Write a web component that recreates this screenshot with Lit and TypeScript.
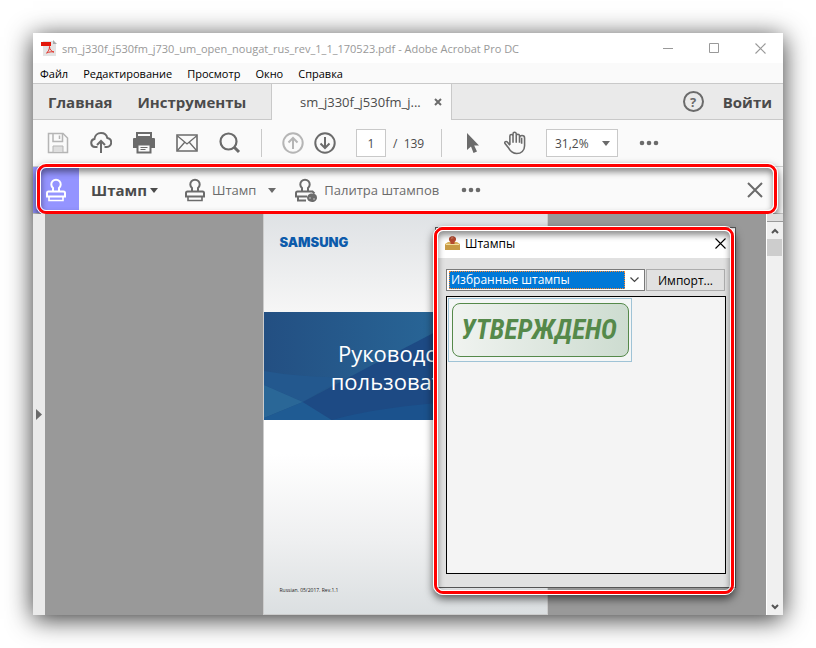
import { LitElement, html, css, svg } from "lit";
import { customElement } from "lit/decorators.js";

const icon = (w: number, h: number, cls: string, body: unknown) => html`
  <svg class=${cls} width=${w} height=${h} viewBox="0 0 ${w} ${h}" aria-hidden="true">${body}</svg>`;

const stampShape = svg`
  <path d="M8 14.500V11a4.700 4.700 0 1 1 6 0v3.500" fill="none" stroke="currentColor" stroke-width="2"/>
  <path d="M2 19.500v-3.500a1.500 1.500 0 0 1 1.500-1.500h15a1.500 1.500 0 0 1 1.500 1.500v3.500z" fill="none" stroke="currentColor" stroke-width="2"/>
  <path d="M4 20v3.500h14V20" fill="none" stroke="currentColor" stroke-width="1.600"/>`;

const icons = {
  pdf: icon(16, 16, "ic", svg`
    <path d="M2 1h10l3 3v12H2z" fill="#e4e4e4"/><path d="M12 0v4h4z" fill="#a9a9a9"/>
    <path d="M0 2h10v4H0z" fill="#e3170a"/>
    <path d="M5.500 13c2-1.500 3-4 3-6.500 0 3 2 5 4.500 5.500-3-.5-5 0-7.500 1z" fill="none" stroke="#e3352c"/>`),
  save: icon(22, 22, "ic", svg`
    <path d="M1.500 1.500h14.500l4.500 4.500v14.500h-19z" fill="none" stroke="currentColor" stroke-width="1.500"/>
    <path d="M6 1.500v8h9.500v-8M12.500 3.500v3.500" fill="none" stroke="currentColor" stroke-width="1.500"/>
    <path d="M6 20.500v-6.500h10v6.500z" fill="#dedede" stroke="currentColor"/>`),
  cloud: icon(22, 22, "ic", svg`
    <path d="M7.500 15H5a4 4 0 0 1-.6-7.900C4.800 3.500 7.500 1 11 1c3.200 0 5.700 2 6.300 5 2.300.4 3.900 2.200 3.900 4.400C21.200 13 19.300 15 17 15h-2.500" fill="none" stroke="currentColor" stroke-width="2"/>
    <path d="M11 21V9.500M7 13l4-4 4 4" fill="none" stroke="currentColor" stroke-width="2"/>`),
  print: icon(22, 22, "ic", svg`
    <path d="M4 1h14v4H4z" fill="#fafafa" stroke="currentColor" stroke-width="2"/>
    <path d="M1 6h20a1 1 0 0 1 1 1v9H0V7a1 1 0 0 1 1-1z" fill="currentColor"/>
    <path d="M4.500 12.500h13v8h-13z" fill="#fafafa" stroke="currentColor" stroke-width="2"/>
    <path d="M7.500 15.500h7M7.500 17.500h5" stroke="currentColor"/>`),
  mail: icon(22, 18, "ic", svg`
    <path d="M1 1h20v16H1z" fill="none" stroke="currentColor" stroke-width="1.600"/>
    <path d="M1.500 2l9.500 8 9.500-8M1.500 16.500l7-8M20.500 16.500l-7-8" fill="none" stroke="currentColor" stroke-width="1.300"/>`),
  search: icon(22, 22, "ic", svg`
    <circle cx="9.500" cy="9.500" r="8" fill="none" stroke="currentColor" stroke-width="2.200"/>
    <path d="M15 15l5 5" stroke="currentColor" stroke-width="3"/>`),
  up: icon(22, 22, "ic", svg`
    <circle cx="11" cy="11" r="9.700" fill="none" stroke="currentColor" stroke-width="2"/>
    <path d="M11 17V6M6.500 10.500L11 6l4.500 4.500" fill="none" stroke="currentColor" stroke-width="2"/>`),
  down: icon(22, 22, "ic", svg`
    <circle cx="11" cy="11" r="9.700" fill="none" stroke="currentColor" stroke-width="2"/>
    <path d="M11 5v11M6.500 11.500L11 16l4.500-4.500" fill="none" stroke="currentColor" stroke-width="2"/>`),
  pointer: icon(22, 22, "ic", svg`<path d="M5 1v17l4-3.500 2.500 6.500 3.500-1.500-2.800-6H17z" fill="currentColor"/>`),
  hand: icon(22, 24, "ic", svg`
    <path d="M6 14V5.200a1.600 1.600 0 0 1 3.200 0V3a1.600 1.600 0 0 1 3.300 0v2a1.600 1.600 0 0 1 3.300 0v2.200a1.600 1.600 0 0 1 5.200 0V15c0 5-3.500 8-8 8-5 0-7-3-8.500-6L.9 12.600c-.6-1.600 1.300-2.600 2.500-1.300L6 14.500M9.200 4.500V12M12.500 4v8M15.800 5.500V12M18 7v6" transform="scale(.98)" fill="none" stroke="currentColor" stroke-width="1.600"/>`),
  dots: icon(22, 6, "ic", svg`<circle cx="4" cy="3" r="2.300" fill="currentColor"/><circle cx="11" cy="3" r="2.300" fill="currentColor"/><circle cx="18" cy="3" r="2.300" fill="currentColor"/>`),
  caret: icon(8, 5, "ic", svg`<path d="M0 0h8L4 5z" fill="currentColor"/>`),
  stamp: icon(22, 26, "ic", stampShape),
  palette: icon(24, 26, "ic", svg`
    <path d="M8 14.500V11a4.700 4.700 0 1 1 6 0v3.500" fill="none" stroke="currentColor" stroke-width="2"/>
    <path d="M13 19.500H2v-3.500a1.500 1.500 0 0 1 1.500-1.500h15l2 2M4 20v3.500h8" fill="none" stroke="currentColor" stroke-width="2"/>
    <path d="M18 16.500c3 0 5 1.600 5 4s-2 4.500-5 4.500-5-2-5-4.200 2-4.300 5-4.300z" fill="currentColor"/>
    <circle cx="16" cy="21" r="1" fill="#a5a5a5"/><circle cx="20" cy="22" r="1" fill="#a5a5a5"/>`),
  close: icon(16, 16, "ic", svg`<path d="M1 1l14 14M15 1L1 15" stroke="currentColor" stroke-width="2"/>`),
  thinClose: icon(11, 11, "ic", svg`<path d="M.5.5l10 10M10.500.5l-10 10" stroke="currentColor" stroke-width="1.100"/>`),
  minimise: icon(11, 11, "ic", svg`<path d="M0 5.500h10" stroke="currentColor"/>`),
  maximise: icon(11, 11, "ic", svg`<path d="M.5.500h9v9h-9z" fill="none" stroke="currentColor"/>`),
  tabClose: icon(8, 8, "ic", svg`<path d="M1 1l6 6M7 1L1 7" stroke="#6b6b6b" stroke-width="2"/>`),
  chevUp: icon(8, 6, "ic", svg`<path d="M1 5l3-3 3 3" fill="none" stroke="currentColor" stroke-width="2"/>`),
  chevDown: icon(8, 6, "ic", svg`<path d="M1 1l3 3 3-3" fill="none" stroke="currentColor" stroke-width="2"/>`),
  comboArrow: icon(9, 6, "ic", svg`<path d="M.5.500l4 4 4-4" fill="none" stroke="currentColor" stroke-width="1.200"/>`),
  expand: icon(6, 11, "ic", svg`<path d="M0 0l6 5.500L0 11z" fill="currentColor"/>`),
  stamper: icon(15, 15, "ic", svg`
    <path d="M0 8l3-2h9l3 2v5.500H0z" fill="#d9b05a"/><path d="M0 9h15v5H0z" fill="#c79a45"/><path d="M1 8.500h13" stroke="#f1dc9b"/>
    <path d="M5.500 8V6C4 5 3.600 3.400 4.200 2 5-.2 10-.2 10.800 2c.6 1.400 0 3-1.300 4v2z" fill="#b4492f"/>
    <path d="M6 2.500c.6-.8 1.700-.8 2.300-.5" stroke="#e59a83" fill="none"/>`),
};

const menu = ["Файл", "Редактирование", "Просмотр", "Окно", "Справка"];
const fileTools = [
  ["Сохранить", "save"], ["В облако", "cloud"], ["Печать", "print"], ["Почта", "mail"], ["Поиск", "search"],
] as const;

const shared = css`
  * { box-sizing: border-box; }
  button, input, select { margin: 0; padding: 0; border: 0; border-radius: 0; background: none; color: inherit; font: inherit; }
  button { display: inline-flex; align-items: center; justify-content: center; cursor: default; white-space: nowrap; }
  select { appearance: none; }
  .ic { display: block; flex: none; }
`;

@customElement("stamp-dialog")
export class StampDialog extends LitElement {
  static styles = [shared, css`
    :host { display: flex; flex-direction: column; box-sizing: border-box; background: #e1e1e1; font-size: 12px; color: #000; border: 1px solid #555; padding: 1px 9px 13px 10px; }
    .title { display: flex; align-items: center; gap: 5px; height: 29px; margin: 0 -9px 0 -10px; padding: 0 9px 0 9px; background: #fff; }
    .name { flex: 1; margin: 0; font-size: 12px; font-weight: 400; }
    .pick { display: flex; gap: 1px; margin-top: 11px; padding-right: 1px; height: 22px; }
    .combo { display: flex; align-items: center; flex: 1; padding: 2px 0 2px 2px; background: #fff; border: 1px solid #7a7a7a; }
    .combo select { flex: 1; min-width: 0; height: 18px; padding-left: 1px; line-height: 16px; background: #0078d7; color: #fff; border: 1px dotted #ff8728; }
    .arrow { display: flex; justify-content: center; width: 19px; color: #444; }
    .import { width: 79px; background: #e1e1e1; border: 1px solid #adadad; }
    .list { flex: 1; margin-top: 5px; border: 1px solid #000; background: #f4f4f4; padding: 1px; }
    .thumb { display: flex; width: 184px; height: 64px; padding: 4px 2px 4px 3px; border: 1px solid #9fc3d6; background: #f4f6f6; }
    .stamp { flex: 1; display: flex; align-items: center; padding-left: 8px; border: 1px solid #55894a; border-radius: 8px;
      background: linear-gradient(90deg, #f0f3f0, #cddcd0); color: #55894a;
      font: italic 700 27px "Roboto Condensed", "Liberation Sans Narrow", "Liberation Sans", sans-serif; }
  `];
  render() {
    return html`
      <div class="title">${icons.stamper}<h2 class="name">Штампы</h2><button aria-label="Закрыть">${icons.thinClose}</button></div>
      <div class="pick">
        <label class="combo">
          <select aria-label="Категория"><option>Избранные штампы</option></select>
          <span class="arrow">${icons.comboArrow}</span>
        </label>
        <button class="import">Импорт...</button>
      </div>
      <div class="list"><div class="thumb"><div class="stamp">УТВЕРЖДЕНО</div></div></div>`;
  }
}

@customElement("app-root")
export class AppRoot extends LitElement {
  static styles = [shared, css`
    :host { display: block; height: 100vh; min-height: 480px; padding: 33px; box-sizing: border-box; background: #fff; overflow: hidden;
      font-family: "Open Sans", "Noto Sans", sans-serif; font-size: 12px; color: #4b4b4b; }
    .window { display: flex; flex-direction: column; height: 100%; background: #fafafa; box-shadow: 0 4px 24px rgba(0, 0, 0, .8); }
    .title { display: flex; align-items: center; height: 30px; padding: 0 17px 0 8px; gap: 5px; background: #fff; color: #999; }
    .caption { flex: 1; margin: 0; font-size: 11px; font-weight: 400; white-space: nowrap; overflow: hidden; }
    .winbtns { display: flex; gap: 35px; }
    .menu { display: flex; align-items: center; gap: 15px; height: 20px; padding-left: 7px; font-size: 11px; color: #000; }
    .tabs { display: flex; height: 37px; border: 1px solid #c9c9c9; border-width: 1px 0; background: #eaeaea; font-size: 15px; font-weight: 700; }
    .main { display: flex; align-items: center; gap: 25px; width: 239px; padding-left: 15px; border-right: 1px solid #c9c9c9; }
    .tab { display: flex; align-items: center; width: 180px; margin-bottom: -1px; padding: 0 9px 0 28px; background: #fafafa; border-right: 1px solid #c9c9c9; font-size: 13px; font-weight: 400; }
    .tab span { flex: 1; white-space: nowrap; }
    .account { display: flex; align-items: center; gap: 19px; margin-left: auto; padding-right: 11px; }
    .help { width: 21px; height: 21px; border: 2px solid #6b6b6b; border-radius: 50%; font-size: 13px; color: #6b6b6b; }
    .tools { display: flex; align-items: center; gap: 20px; height: 47px; padding: 0 14px; border-bottom: 1px solid #d0d0d0; color: #6b6b6b; }
    .group { display: flex; align-items: center; gap: 21px; }
    .pages { display: flex; align-items: center; gap: 10px; }
    .off { color: #b5b5b5; }
    .tool { width: 22px; height: 28px; }
    .rule { width: 1px; height: 28px; background: #c9c9c9; }
    .pager { display: flex; align-items: center; gap: 7px; width: 65px; white-space: nowrap; color: #4b4b4b; }
    .pager input { width: 30px; height: 28px; border: 1px solid #c9c9c9; background: #fff; text-align: center; }
    .zoom { display: flex; align-items: center; width: 72px; height: 28px; padding: 0 7px 0 8px; border: 1px solid #c9c9c9; background: #fff; }
    .zoom select { flex: 1; min-width: 0; color: #4b4b4b; }
    .stampbar { position: relative; display: flex; align-items: center; height: 47px; padding-right: 20px; border-bottom: 1px solid #c9c9c9; font-size: 13px; color: #6b6b6b; }
    .tile { display: flex; align-items: center; justify-content: center; align-self: stretch; width: 46px; background: #9494ff; color: #fff; }
    .heading { gap: 3px; width: 78px; margin-left: 12px; margin-right: 15px; justify-content: flex-start; font-size: 15px; font-weight: 700; color: #4b4b4b; }
    .action { gap: 6px; }
    .drop { width: 24px; height: 28px; margin-right: 10px; margin-left: 4px; }
    .more { margin-left: 21px; }
    .end { margin-left: auto; }
    .ring { position: absolute; border: 1px solid #fff; border-radius: 10px; box-shadow: 0 4px 8px rgba(0, 0, 0, .6); pointer-events: none; }
    .ring::before { content: ""; position: absolute; inset: 0; border: 3px solid #f00; border-radius: 9px; }
    .ring::after { content: ""; position: absolute; inset: 3px; border: 1px solid #fff; border-radius: 6px; box-shadow: inset 0 4px 6px rgba(0, 0, 0, .45); }
    .ring-bar { inset: -4px 5px -2px 3px; }
    .ring-dialog { inset: -1px 1px -7px -2px; }
    .body { position: relative; flex: 1; display: flex; min-height: 0; background: #999; }
    .rail { width: 12px; background: #eaeaea; color: #6b6b6b; }
    .canvas { flex: 1; display: flex; justify-content: center; }
    .page { display: flex; flex-direction: column; width: 285px; margin-right: 1px; border: 1px solid #ccc; border-top: 0; background: linear-gradient(#dfe2e5, #e6e8ea 30px, #f6f6f6 98px, #fff 98px, #fff 60%, #eeeff0 82%, #dbdfe1); }
    .brand { height: 98px; margin: 0; padding: 19px 16px; font: 900 13px/18px Inter, "Liberation Sans", sans-serif; color: #0d5bab; }
    .banner { position: relative; height: 108px; }
    .art { position: absolute; inset: 0; width: 100%; height: 100%; }
    .book { position: relative; margin: 0; padding-top: 27px; text-align: center; font-size: 22px; line-height: 28px; font-weight: 400; color: #fff; }
    .rev { margin: auto 0 20px 16px; font-size: 5px; line-height: 8px; color: #222; }
    .scroll { display: flex; flex-direction: column; width: 17px; background: #f0f0f0; border-left: 1px solid #fff; color: #555; }
    .split { height: 8px; background: #dedede; border-bottom: 1px solid #999; }
    .arrow { height: 17px; width: 100%; }
    .thumb { width: 15px; height: 17px; background: #cdcdcd; }
    .last { margin-top: auto; }
    .floating { position: absolute; top: 13px; right: 47px; bottom: 27px; width: 301px; }
    stamp-dialog { height: 100%; }
  `];
  render() {
    return html`
      <div class="window">
        <header class="title">
          ${icons.pdf}
          <h1 class="caption">sm_j330f_j530fm_j730_um_open_nougat_rus_rev_1_1_170523.pdf - Adobe Acrobat Pro DC</h1>
          <div class="winbtns">
            <button aria-label="Свернуть">${icons.minimise}</button>
            <button aria-label="Развернуть">${icons.maximise}</button>
            <button aria-label="Закрыть">${icons.thinClose}</button>
          </div>
        </header>
        <nav class="menu">${menu.map((m) => html`<button>${m}</button>`)}</nav>
        <div class="tabs">
          <div class="main"><button>Главная</button><button>Инструменты</button></div>
          <div class="tab"><span>sm_j330f_j530fm_j...</span><button aria-label="Закрыть вкладку">${icons.tabClose}</button></div>
          <div class="account"><button class="help">?</button><button>Войти</button></div>
        </div>
        <div class="tools">
          <div class="group">${fileTools.map(([label, name]) => html`
            <button class="tool ${name === "save" ? "off" : ""}" aria-label=${label}>${icons[name]}</button>`)}</div>
          <span class="rule"></span>
          <div class="pages">
            <button class="tool off" aria-label="Предыдущая">${icons.up}</button>
            <button class="tool" aria-label="Следующая">${icons.down}</button>
          </div>
          <div class="pager"><input aria-label="Страница" value="1"><span>/&nbsp; 139</span></div>
          <span class="rule"></span>
          <button class="tool" aria-label="Выделение">${icons.pointer}</button>
          <button class="tool" aria-label="Рука">${icons.hand}</button>
          <label class="zoom"><select aria-label="Масштаб"><option>31,2%</option></select>${icons.caret}</label>
          <button class="tool" aria-label="Ещё">${icons.dots}</button>
        </div>
        <div class="stampbar">
          <div class="tile">${icons.stamp}</div>
          <button class="heading">Штамп ${icons.caret}</button>
          <button class="action">${icons.stamp}Штамп</button>
          <button class="drop" aria-label="Список штампов">${icons.caret}</button>
          <button class="action">${icons.palette}Палитра штампов</button>
          <button class="more" aria-label="Ещё">${icons.dots}</button>
          <button class="end" aria-label="Закрыть">${icons.close}</button>
          <div class="ring ring-bar"></div>
        </div>
        <div class="body">
          <button class="rail" aria-label="Панель">${icons.expand}</button>
          <main class="canvas">
            <article class="page">
              <p class="brand">SAMSUNG</p>
              <div class="banner">
                <svg class="art" viewBox="0 0 284 108" preserveAspectRatio="none" aria-hidden="true">
                  <defs><linearGradient id="g" x1="0" y1="0" x2="1" y2="0"><stop offset="0" stop-color="#234f82"/><stop offset=".6" stop-color="#286596"/><stop offset="1" stop-color="#286596"/></linearGradient></defs>
                  <path d="M0 0h284v108H0z" fill="url(#g)"/>
                  <path d="M0 59Q40 66 82 65L39 90 0 73z" fill="#23588e"/>
                  <path d="M0 73l39 17L0 106z" fill="#2a6797"/>
                  <path d="M0 106L39 90l29 18H0z" fill="#1f5b93"/>
                  <path d="M39 90Q110 52 170 21L284 0v108H68z" fill="#1d4a84"/>
                  <path d="M68 108Q130 90 284 84v24z" fill="#1b528d"/>
                </svg>
                <h2 class="book">Руководство<br>пользователя</h2>
              </div>
              <p class="rev">Russian. 05/2017. Rev.1.1</p>
            </article>
          </main>
          <div class="scroll">
            <div class="split"></div>
            <button class="arrow" aria-label="Вверх">${icons.chevUp}</button>
            <div class="thumb"></div>
            <button class="arrow last" aria-label="Вниз">${icons.chevDown}</button>
          </div>
          <div class="floating"><stamp-dialog></stamp-dialog><div class="ring ring-dialog"></div></div>
        </div>
      </div>`;
  }
}
